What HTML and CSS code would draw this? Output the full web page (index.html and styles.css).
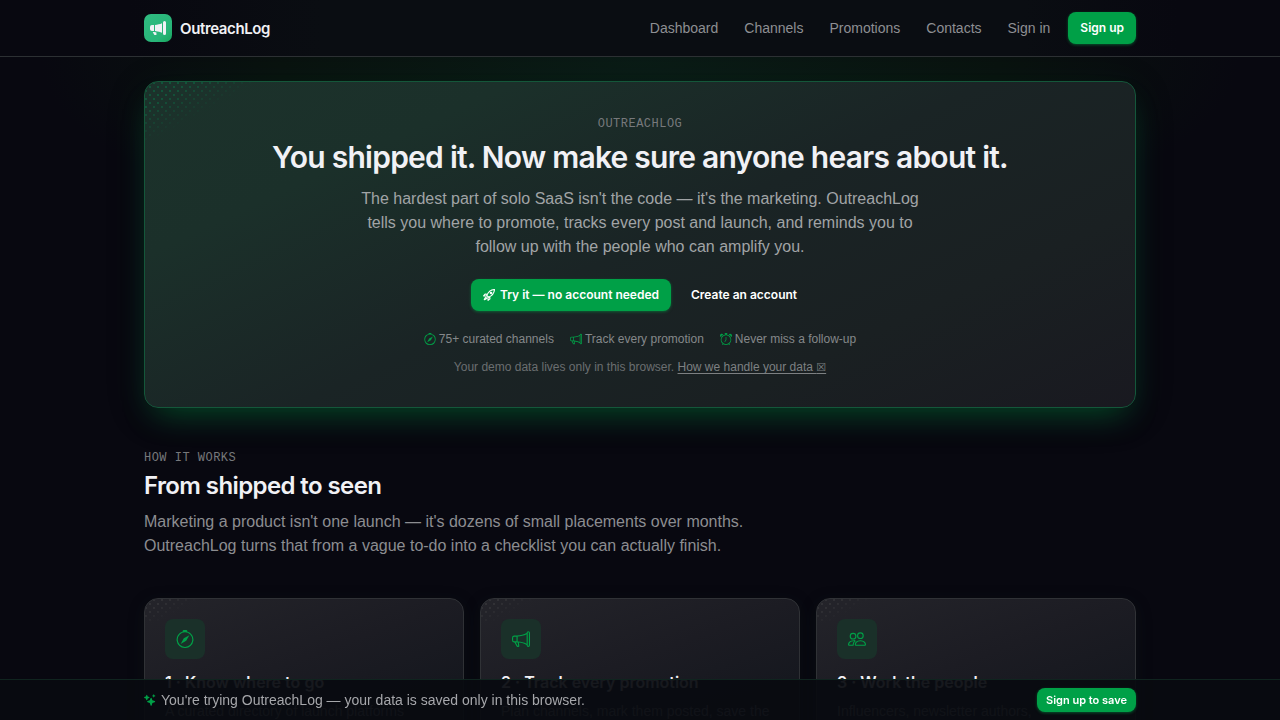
FILE: index.html
```html
<!DOCTYPE html>
<html lang="en">
<head>
  <meta charset="UTF-8" />
  <title>OutreachLog</title>
  <meta name="viewport" content="width=device-width, initial-scale=1.0" />
  <link rel="stylesheet" href="styles.css">
</head>
<body>
  <!-- shared icons -->
  <svg class="sprite" aria-hidden="true">
    <symbol id="i-megaphone-fill" viewBox="0 0 16 16"><path d="M13 2.5a1.5 1.5 0 0 1 3 0v11a1.5 1.5 0 0 1-3 0zm-1 .724c-2.067.95-4.539 1.481-7 1.656v6.237a25 25 0 0 1 1.088.085c2.053.204 4.038.668 5.912 1.56zm-8 7.841V4.934c-.68.027-1.399.043-2.008.053A2.02 2.02 0 0 0 0 7v2c0 1.106.896 1.996 1.994 2.009l.496.008a64 64 0 0 1 1.51.048m1.39 1.081q.428.032.85.078l.253 1.69a1 1 0 0 1-.983 1.187h-.548a1 1 0 0 1-.916-.599l-1.314-2.48a66 66 0 0 1 1.692.064q.491.026.966.06"/></symbol>
    <symbol id="i-megaphone" viewBox="0 0 16 16"><path d="M13 2.5a1.5 1.5 0 0 1 3 0v11a1.5 1.5 0 0 1-3 0v-.214c-2.162-1.241-4.49-1.843-6.912-2.083l.405 2.712A1 1 0 0 1 5.51 15.1h-.548a1 1 0 0 1-.916-.599l-1.85-3.49-.202-.003A2.014 2.014 0 0 1 0 9V7a2.02 2.02 0 0 1 1.992-2.013 75 75 0 0 0 2.483-.075c3.043-.154 6.148-.849 8.525-2.199zm1 0v11a.5.5 0 0 0 1 0v-11a.5.5 0 0 0-1 0m-1 1.35c-2.344 1.205-5.209 1.842-8 2.033v4.233q.27.015.537.036c2.568.189 5.093.744 7.463 1.993zm-9 6.215v-4.13a95 95 0 0 1-1.992.052A1.02 1.02 0 0 0 1 7v2c0 .55.448 1.002 1.006 1.009A61 61 0 0 1 4 10.065m-.657.975 1.609 3.037.01.024h.548l-.002-.014-.443-2.966a68 68 0 0 0-1.722-.082z"/></symbol>
    <symbol id="i-compass" viewBox="0 0 16 16"><path d="M8 16.016a7.5 7.5 0 0 0 1.962-14.74A1 1 0 0 0 9 0H7a1 1 0 0 0-.962 1.276A7.5 7.5 0 0 0 8 16.016m6.5-7.5a6.5 6.5 0 1 1-13 0 6.5 6.5 0 0 1 13 0"/><path d="m6.94 7.44 4.95-2.83-2.83 4.95-4.949 2.83z"/></symbol>
    <symbol id="i-alarm" viewBox="0 0 16 16"><path d="M8.5 5.5a.5.5 0 0 0-1 0v3.362l-1.429 2.38a.5.5 0 1 0 .858.515l1.5-2.5A.5.5 0 0 0 8.5 9z"/><path d="M6.5 0a.5.5 0 0 0 0 1H7v1.07a7.001 7.001 0 0 0-3.273 12.474l-.602.602a.5.5 0 0 0 .707.708l.746-.746A6.97 6.97 0 0 0 8 16a6.97 6.97 0 0 0 3.422-.892l.746.746a.5.5 0 0 0 .707-.708l-.601-.602A7.001 7.001 0 0 0 9 2.07V1h.5a.5.5 0 0 0 0-1zm1.038 3.018a6 6 0 0 1 .924 0 6 6 0 1 1-.924 0M0 3.5c0 .753.333 1.429.86 1.887A8.04 8.04 0 0 1 4.387 1.86 2.5 2.5 0 0 0 0 3.5M13.5 1c-.753 0-1.429.333-1.887.86a8.04 8.04 0 0 1 3.527 3.527A2.5 2.5 0 0 0 13.5 1"/></symbol>
    <symbol id="i-people" viewBox="0 0 16 16"><g fill="none" stroke="currentColor"><circle cx="11" cy="5" r="2.5"/><circle cx="4.5" cy="5.5" r="2.5"/><path d="M7 13.5q-.5 0-.5-.5c0-1 1-3.500 4.500-3.500s4.500 2.500 4.500 3.500q0 .5-.5.5zM6.500 9.650A5 5 0 0 0 5 9.500C1.500 9.500.5 12 .5 13q0 .5.5.5h3.500c0-1.800.6-3 2-3.850"/></g></symbol>
    <symbol id="i-rocket" viewBox="0 0 16 16"><g fill="none" stroke="currentColor" stroke-width="1.500" stroke-linejoin="round" stroke-linecap="round"><path d="M5 8.500C7 4 10.500 1 15.300.7 15 5.500 12 9 7.500 11zM5.500 7 2.800 6.800.8 9.200l4 .2M9 10.500l.2 2.700-2.400 2-.2-4M4 11c-1.500.5-2 2.200-2.300 3.300C2.800 14 4.500 13.500 5 12"/><circle cx="10.700" cy="5.300" r="1"/></g></symbol>
    <symbol id="i-stars" viewBox="0 0 16 16"><path d="M9.500 5q.6 0 .8.600l.9 2.800 3 1q1.400.7 0 1.500l-3 1-.9 3q-.8 1.500-1.600 0l-1-3-2.900-1q-1.400-.8 0-1.500l2.900-1 1-2.800q.2-.6.800-.6M3.700 1q.4 0 .6.500l.7 1.900 1.900.7q.8.600 0 1.200l-1.900.7-.7 1.900q-.6.800-1.200 0L2.400 6 .5 5.300q-.8-.6 0-1.200l1.900-.7.7-1.900q.2-.5.600-.5M13 0l.8 1.700 1.700.8-1.700.8L13 5l-.8-1.700-1.700-.8 1.700-.8z"/></symbol>
  </svg>

  <header class="topbar">
    <div class="container topbar-inner">
      <a class="brand" href="#">
        <span class="logo"><svg><use href="#i-megaphone-fill"/></svg></span>
        OutreachLog
      </a>
      <nav class="nav">
        <a href="#">Dashboard</a>
        <a href="#">Channels</a>
        <a href="#">Promotions</a>
        <a href="#">Contacts</a>
        <a href="#">Sign in</a>
        <button class="btn" type="button">Sign up</button>
      </nav>
    </div>
  </header>

  <main>
    <div class="container">
      <section class="hero">
        <p class="eyebrow">OutreachLog</p>
        <h1>You shipped it. Now make sure anyone hears about it.</h1>
        <p class="lead">The hardest part of solo SaaS isn't the code — it's the marketing. OutreachLog tells you where to promote, tracks every post and launch, and reminds you to follow up with the people who can amplify you.</p>
        <div class="actions">
          <button class="btn" type="button"><svg><use href="#i-rocket"/></svg>Try it — no account needed</button>
          <button class="btn btn-ghost" type="button">Create an account</button>
        </div>
        <ul class="perks">
          <li><svg><use href="#i-compass"/></svg>75+ curated channels</li>
          <li><svg><use href="#i-megaphone"/></svg>Track every promotion</li>
          <li><svg><use href="#i-alarm"/></svg>Never miss a follow-up</li>
        </ul>
        <p class="note">Your demo data lives only in this browser. <a href="#">How we handle your data <span class="mark">☒</span></a></p>
      </section>

      <section class="how">
        <p class="eyebrow">How it works</p>
        <h2>From shipped to seen</h2>
        <p class="intro">Marketing a product isn't one launch — it's dozens of small placements over months. OutreachLog turns that from a vague to-do into a checklist you can actually finish.</p>
        <div class="cards">
          <article class="card">
            <span class="card-icon"><svg><use href="#i-compass"/></svg></span>
            <h3>1 · Know where to go</h3>
            <p>A curated directory of launch platforms</p>
          </article>
          <article class="card">
            <span class="card-icon"><svg><use href="#i-megaphone"/></svg></span>
            <h3>2 · Track every promotion</h3>
            <p>Plan channels, mark them posted, save the</p>
          </article>
          <article class="card">
            <span class="card-icon"><svg><use href="#i-people"/></svg></span>
            <h3>3 · Work the people</h3>
            <p>Influencers, newsletter authors,</p>
          </article>
        </div>
      </section>
    </div>
  </main>

  <aside class="demo-bar">
    <div class="container demo-inner">
      <p><svg><use href="#i-stars"/></svg>You're trying OutreachLog — your data is saved only in this browser.</p>
      <button class="btn btn-small" type="button">Sign up to save</button>
    </div>
  </aside>
</body>
</html>
```
FILE: styles.css
```css
* {
  box-sizing: border-box;
}
body {
  margin: 0;
  font-family: "Liberation Sans", Arial, sans-serif;
  font-size: 14px;
  color: #f1f1f5;
  background: #080810;
}
h1, h2, h3, p, ul {
  margin: 0;
}
h1, h2, h3, .brand {
  font-family: Inter, "Liberation Sans", sans-serif;
  font-weight: 600;
}
a {
  color: inherit;
  text-decoration: none;
}
svg {
  fill: currentColor;
  flex: none;
}
.sprite {
  position: absolute;
  width: 0;
  height: 0;
}
.container {
  max-width: 1024px;
  margin: 0 auto;
  padding: 0 16px;
}

/* top bar */
.topbar {
  position: sticky;
  top: 0;
  z-index: 10;
  background: linear-gradient(90deg, #080810 10%, #0a0d12 25%, #0a0d12 80%, #080810 92%);
  border-bottom: 1px solid #2c3033;
}
.topbar-inner {
  display: flex;
  align-items: center;
  justify-content: space-between;
  height: 56px;
}
.brand {
  display: flex;
  align-items: center;
  gap: 8px;
  font-size: 15px;
  letter-spacing: -0.025em;
}
.logo {
  display: grid;
  place-items: center;
  width: 28px;
  height: 28px;
  border-radius: 7px;
  background: linear-gradient(135deg, #2fbb80 10%, #28b578 70%, #16a75c);
}
.logo svg {
  width: 16px;
  height: 16px;
}
.nav {
  display: flex;
  align-items: center;
  gap: 26px;
  color: #8e8f93;
}
.nav .btn {
  margin-left: -8px;
}
.btn {
  display: inline-flex;
  align-items: center;
  gap: 5px;
  height: 32px;
  padding: 0 12px;
  border: 0;
  border-radius: 8px;
  font: 600 12px/16px Inter, "Liberation Sans", sans-serif;
  color: #fff;
  background: #00a047;
  box-shadow: 0 1px 3px rgba(0, 160, 71, 0.5);
  cursor: pointer;
}
.btn svg {
  width: 12px;
  height: 12px;
}
.btn-ghost {
  background: none;
  box-shadow: none;
}
.btn-small {
  height: 24px;
  padding: 0 9px;
  font-size: 11px;
}

/* hero */
main {
  padding: 24px 0 41px;
  background: radial-gradient(600px 200px at 50% 0, #0a1b16, #09120f 60%, transparent) no-repeat;
}
.hero {
  position: relative;
  padding: 32px;
  text-align: center;
  border: 1px solid #14573a;
  border-radius: 14px;
  background: linear-gradient(155deg, #1c322b 0%, #1b302a 22%, #1a2425 50%, #1a2022 75%, #191920 100%);
  box-shadow:
    0 16px 32px -12px rgba(0, 160, 71, 0.4),
    0 8px 40px rgba(10, 80, 50, 0.15);
}
/* dotted sheen in the corner */
.hero::before,
.card::before {
  content: "";
  position: absolute;
  top: 0;
  left: 0;
  width: 112px;
  height: 60px;
  border-radius: 13px 0 0 0;
  opacity: 0.6;
  background:
    radial-gradient(circle at 1px 1px, #0d6b45 1px, transparent 1px) 0 0 / 8px 8px,
    radial-gradient(circle at 1px 1px, #0d6b45 1px, transparent 1px) 4px 4px / 8px 8px;
  mask-image: linear-gradient(151deg, #000 20%, transparent 52%);
}
.card::before {
  width: 64px;
  height: 24px;
  opacity: 0.3;
  filter: grayscale(1);
}
.eyebrow {
  font: 12px/20px "Liberation Mono", monospace;
  letter-spacing: 0.04em;
  text-transform: uppercase;
  color: #77797c;
}
h1 {
  margin-top: 5px;
  font-size: 30px;
  line-height: 36px;
  letter-spacing: -0.025em;
}
.lead {
  max-width: 576px;
  margin: 12px auto 0;
  font-size: 16px;
  line-height: 24px;
  color: #a1a4a6;
}
.actions {
  display: flex;
  justify-content: center;
  gap: 8px;
  margin-top: 20px;
}
.perks {
  display: flex;
  justify-content: center;
  gap: 16px;
  margin-top: 20px;
  padding: 0;
  list-style: none;
  font-size: 12px;
  line-height: 16px;
  color: #85888a;
}
.perks li {
  display: flex;
  align-items: center;
  gap: 3px;
}
.perks svg {
  width: 12px;
  height: 12px;
  color: #00a047;
}
.note {
  margin-top: 12px;
  font-size: 12px;
  line-height: 16px;
  color: #6a6e70;
}
.note a {
  color: #7d8082;
  text-decoration: underline;
  text-underline-offset: 2px;
}
.mark {
  font-family: "DejaVu Sans", sans-serif;
  font-size: 11px;
  line-height: 1;
}

/* how it works */
.how {
  margin-top: 40px;
}
h2 {
  margin-top: 2px;
  font-size: 24px;
  line-height: 32px;
  letter-spacing: -0.025em;
}
.intro {
  max-width: 640px;
  margin-top: 8px;
  font-size: 16px;
  line-height: 24px;
  color: #8c8d91;
}
.cards {
  display: grid;
  grid-template-columns: repeat(3, 1fr);
  gap: 16px;
  margin-top: 40px;
}
.card {
  position: relative;
  padding: 20px;
  border: 1px solid #303236;
  border-radius: 14px;
  background: linear-gradient(160deg, #24242a, #1c1c23 45%, #16181f 75%, #131319);
  box-shadow: 0 4px 16px rgba(15, 30, 25, 0.3);
}
.card-icon {
  display: grid;
  place-items: center;
  width: 40px;
  height: 40px;
  border-radius: 8px;
  color: #00a047;
  background: #1a3029;
}
.card-icon svg {
  width: 18px;
  height: 18px;
}
.card h3 {
  margin-top: 12px;
  font-size: 16px;
  line-height: 22px;
}
.card p {
  margin-top: 8px;
  line-height: 20px;
  color: #8c8d91;
}

/* demo notice */
.demo-bar {
  position: fixed;
  left: 0;
  right: 0;
  bottom: 0;
  background: rgba(8, 11, 16, 0.94);
  border-top: 1px solid #10241f;
}
.demo-inner {
  display: flex;
  align-items: center;
  justify-content: space-between;
  height: 40px;
}
.demo-inner p {
  display: flex;
  align-items: center;
  gap: 5px;
  color: #a6a7ab;
}
.demo-inner svg {
  width: 12px;
  height: 12px;
  color: #00a047;
}
```
